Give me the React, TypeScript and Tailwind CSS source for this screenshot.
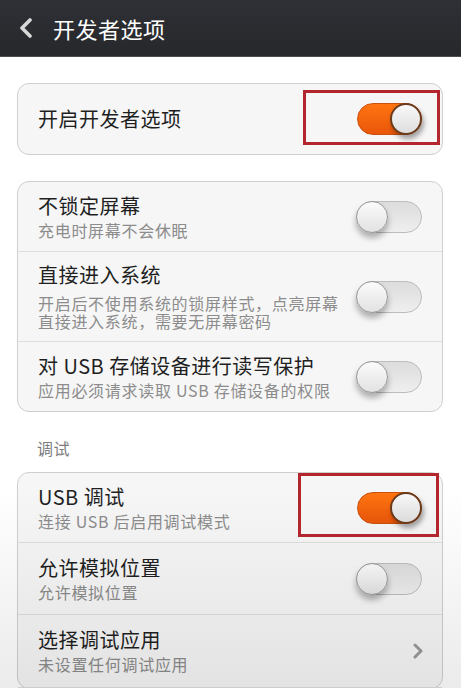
import React from 'react';

const font = { fontFamily: '"Noto Sans CJK SC", "Noto Sans", sans-serif' };

function Toggle({ on }: { on: boolean }) {
  if (on) {
    return (
      <div className="relative w-[65px] h-[32px] rounded-full bg-gradient-to-b from-[#ff7410] to-[#e9560a] border border-[#c9520f] shrink-0">
        <div className="absolute right-[-1px] top-[-1px] w-[32px] h-[32px] rounded-full border-2 border-[#6b3a1c] bg-gradient-to-b from-[#f8f8f8] to-[#dedede] shadow-[2px_4px_5px_rgba(0,0,0,0.35)]" />
      </div>
    );
  }
  return (
    <div className="relative w-[66px] h-[32px] rounded-full bg-gradient-to-b from-[#dcdcdc] to-[#efefef] border border-[#bdbdbd] shrink-0">
      <div className="absolute left-[-1px] top-[-1px] w-[32px] h-[32px] rounded-full border border-[#9a9a9a] bg-gradient-to-b from-[#fbfbfb] to-[#e2e2e2] shadow-[0_5px_6px_rgba(0,0,0,0.3)]" />
    </div>
  );
}

function Row({
  title,
  sub,
  right,
  h,
  last,
  multi,
}: {
  title: string;
  sub?: string[];
  right: React.ReactNode;
  h: string;
  last?: boolean;
  multi?: boolean;
}) {
  return (
    <div className={`flex items-center justify-between pl-[20px] pr-[20px] ${h} ${last ? '' : 'border-b border-[#dedede]'}`}>
      <div className="flex flex-col">
        <div className="text-[20px] leading-[24px] text-[#1f1f1f] tracking-[0.5px]">{title}</div>
        {sub && (
          <p className={`${multi ? 'mt-[7px] leading-[18px]' : 'mt-[2px] leading-[20px]'} text-[16px] text-[#8c8c8c] tracking-[0.7px]`}>
            {sub.map((s, i) => (
              <React.Fragment key={s}>
                {i > 0 && <br />}
                {s}
              </React.Fragment>
            ))}
          </p>
        )}
      </div>
      {right}
    </div>
  );
}

export default function App() {
  return (
    <div className="relative w-full h-[688px] overflow-hidden bg-white" style={font}>
      {/* 标题栏 */}
      <div className="h-[57px] bg-gradient-to-b from-[#2e3035] to-[#26282c] border-b border-[#4a4c50] flex items-center">
        <svg className="ml-[18px] w-[16px] h-[20px]" viewBox="0 0 16 20">
          <path d="M12 2 L4 10 L12 18" fill="none" stroke="#d8d8d8" strokeWidth="3.6" strokeLinecap="round" strokeLinejoin="round" />
        </svg>
        <span className="ml-[19px] text-[22px] text-white tracking-[0.5px]">开发者选项</span>
      </div>

      {/* 开启开发者选项 */}
      <div className="mt-[26px] mx-[17px] mr-[18px] rounded-[12px] border border-[#cfcfcf] bg-[#f6f6f6]">
        <Row title="开启开发者选项" h="h-[70px]" last right={<Toggle on />} />
      </div>

      <div className="mt-[26px] mx-[17px] mr-[18px] rounded-[12px] border border-[#cfcfcf] bg-[#f6f6f6]">
        <Row title="不锁定屏幕" sub={['充电时屏幕不会休眠']} h="h-[70px]" right={<Toggle on={false} />} />
        <Row
          title="直接进入系统"
          sub={['开启后不使用系统的锁屏样式，点亮屏幕', '直接进入系统，需要无屏幕密码']}
          multi
          h="h-[90px]"
          right={<Toggle on={false} />}
        />
        <Row title="对 USB 存储设备进行读写保护" sub={['应用必须请求读取 USB 存储设备的权限']} h="h-[69px]" last right={<Toggle on={false} />} />
      </div>

      <div className="pt-[24px] pl-[37px] text-[16px] leading-[24px] text-[#7d7d7d] tracking-[0.5px]">调试</div>

      <div className="mt-[12px] mx-[17px] mr-[18px] rounded-[12px] border border-[#cfcfcf] bg-[#f6f6f6]">
        <Row title="USB 调试" sub={['连接 USB 后启用调试模式']} h="h-[70px]" right={<Toggle on />} />
        <Row title="允许模拟位置" sub={['允许模拟位置']} h="h-[72px]" right={<Toggle on={false} />} />
        <Row
          title="选择调试应用"
          sub={['未设置任何调试应用']}
          h="h-[73px]"
          right={
            <svg className="w-[12px] h-[16px] mr-[-2px]" viewBox="0 0 12 16">
              <path d="M3 2 L9 8 L3 14" fill="none" stroke="#9a9a9a" strokeWidth="3" strokeLinecap="round" strokeLinejoin="round" />
            </svg>
          }
        />
      </div>

      {/* 底部渐暗 */}
      <div className="pointer-events-none absolute left-0 right-0 bottom-0 h-[200px] bg-gradient-to-b from-transparent to-[rgba(0,0,0,0.08)]" />

      {/* 红色标注框 */}
      <div className="pointer-events-none absolute left-[303px] top-[90px] w-[137px] h-[55px] border-[3px] border-[#b3262d]" />
      <div className="pointer-events-none absolute left-[298px] top-[473px] w-[141px] h-[64px] border-[3px] border-[#b3262d]" />
    </div>
  );
}
